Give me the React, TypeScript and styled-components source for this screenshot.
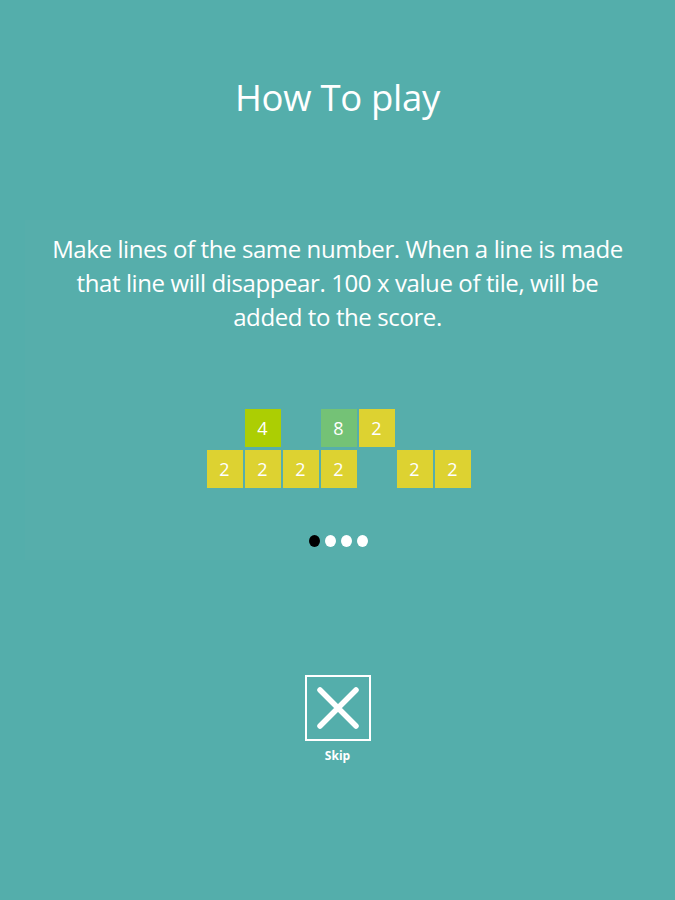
import styled, { createGlobalStyle } from "styled-components";

const GlobalStyle = createGlobalStyle`
  html, body {
    margin: 0;
    padding: 0;
    background: #54aeab;
  }
  body {
    font-family: "Open Sans", "Liberation Sans", sans-serif;
  }
`;

type TileData = { value: number | null; color?: string };

const topRow: TileData[] = [
  { value: null },
  { value: 4, color: "#acce03" },
  { value: null },
  { value: 8, color: "#74c276" },
  { value: 2, color: "#ddd231" },
  { value: null },
  { value: null },
];

const bottomRow: TileData[] = [
  { value: 2, color: "#ddd231" },
  { value: 2, color: "#ddd231" },
  { value: 2, color: "#ddd231" },
  { value: 2, color: "#ddd231" },
  { value: null },
  { value: 2, color: "#ddd231" },
  { value: 2, color: "#ddd231" },
];

export default function App() {
  return (
    <Page>
      <GlobalStyle />
      <Title>How To play</Title>

      <Panel>
        <Description>
          Make lines of the same number. When a line is made that line will
          disappear. 100 x value of tile, will be added to the score.
        </Description>

        <Board>
          {[topRow, bottomRow].map((row, r) => (
            <TileRow key={r}>
              {row.map((t, i) => (
                <Tile key={i} $color={t.color}>
                  {t.value}
                </Tile>
              ))}
            </TileRow>
          ))}
        </Board>

        <Dots>
          {[0, 1, 2, 3].map((i) => (
            <Dot key={i} $active={i === 0} />
          ))}
        </Dots>
      </Panel>

      <SkipButton>
        <SkipBox>
          <svg width="46" height="46" viewBox="0 0 46 46">
            <path
              d="M5 5 L41 41 M41 5 L5 41"
              stroke="#fff"
              strokeWidth="5.5"
              strokeLinecap="round"
            />
          </svg>
        </SkipBox>
        <SkipLabel>Skip</SkipLabel>
      </SkipButton>
    </Page>
  );
}

const Page = styled.div`
  width: 675px;
  height: 900px;
  display: flex;
  flex-direction: column;
  align-items: center;
  color: #fff;
  overflow: hidden;
`;

const Title = styled.h1`
  margin: 70px 0 0;
  font-size: 36.5px;
  font-weight: 400;
  line-height: 54px;
  letter-spacing: -0.3px;
`;

const Panel = styled.div`
  margin-top: 96px;
  width: 625px;
  height: 340px;
  box-sizing: border-box;
  background: rgba(255, 255, 255, 0.012);
  display: flex;
  flex-direction: column;
  align-items: center;
`;

const Description = styled.p`
  margin: 12px 0 0;
  width: 578px;
  text-align: center;
  font-size: 24px;
  line-height: 34px;
  letter-spacing: -0.4px;
`;

const Board = styled.div`
  margin-top: 75px;
  margin-left: 2px;
  display: flex;
  flex-direction: column;
  gap: 3px;
`;

const TileRow = styled.div`
  display: flex;
  gap: 2px;
`;

const Tile = styled.div<{ $color?: string }>`
  width: 36px;
  height: 38px;
  background: ${(p) => p.$color ?? "transparent"};
  display: flex;
  align-items: center;
  justify-content: center;
  font-size: 18px;
  color: #fff;
`;

const Dots = styled.div`
  margin-top: 47px;
  margin-left: 2px;
  display: flex;
  gap: 5px;
`;

const Dot = styled.div<{ $active: boolean }>`
  width: 11px;
  height: 12px;
  border-radius: 50%;
  background: ${(p) => (p.$active ? "#000" : "#fff")};
`;

const SkipButton = styled.div`
  margin-top: 115px;
  display: flex;
  flex-direction: column;
  align-items: center;
`;

const SkipBox = styled.div`
  width: 66px;
  height: 66px;
  box-sizing: border-box;
  border: 2px solid #fff;
  display: flex;
  align-items: center;
  justify-content: center;
`;

const SkipLabel = styled.div`
  margin-top: 6px;
  font-size: 12px;
  font-weight: 700;
`;
